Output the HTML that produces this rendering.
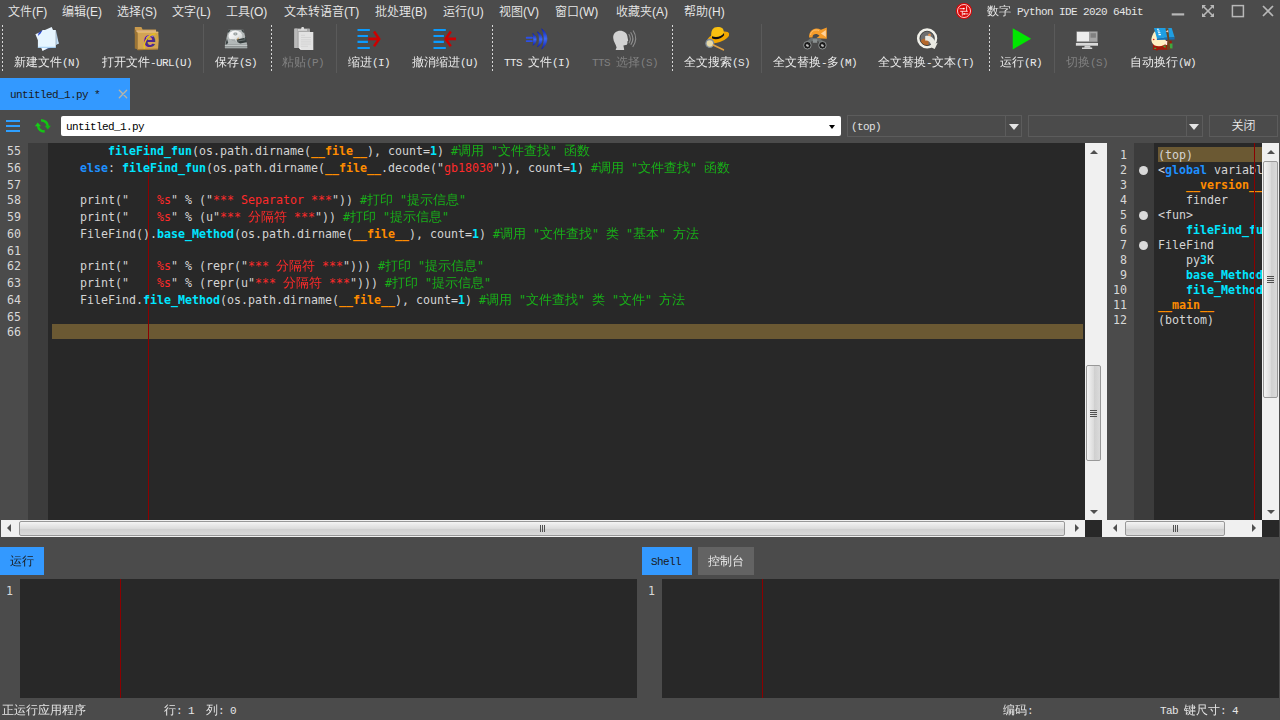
<!DOCTYPE html>
<html lang="zh-CN"><head><meta charset="utf-8"><title>数字 Python IDE 2020 64bit</title>
<style>
*{margin:0;padding:0;box-sizing:border-box}
html,body{width:1280px;height:720px;overflow:hidden;background:#4b4b4b}
body{position:relative;font-family:"Liberation Sans","Noto Sans CJK SC",sans-serif;font-size:12px;color:#e6e6e6}
.a{position:absolute}
.menu span{position:absolute;top:3px;font-weight:350;height:18px;line-height:18px;white-space:nowrap;color:#e8e8e8;font-size:12px}
.ss{font-family:"Liberation Mono","WenQuanYi Zen Hei",monospace;font-size:12px;white-space:nowrap;line-height:14px;height:14px;font-weight:400}
.ss i{font-style:normal;font-size:11px;letter-spacing:-.6px}
.tl{position:absolute;top:56px;color:#ececec}
.tl.d{color:#808080}
.grip{position:absolute;top:25px;width:1px;height:46px;background:repeating-linear-gradient(to bottom,#d8d8d8 0,#d8d8d8 2px,transparent 2px,transparent 4px)}
.sep{position:absolute;top:24px;width:1px;height:49px;background:#5a5a5a}
.code{font-family:"DejaVu Sans Mono","Noto Sans CJK SC",monospace;font-size:11.63px;white-space:pre;color:#d4d4d4}
.code u{text-decoration:none;line-height:0;font-size:13px;font-family:"WenQuanYi Zen Hei",sans-serif}
.ln{position:absolute;left:0;white-space:pre}
.k{color:#1e90ff;font-weight:bold}
.f{color:#00e5ff;font-weight:bold}
.o{color:#ff8c00;font-weight:bold}
.s{color:#ff2a2a}
.c{color:#18b018}
.n{color:#00e5ff;font-weight:bold}
</style></head>
<body>
<div class="menu">
<span style="left:8px">文件(F)</span>
<span style="left:62px">编辑(E)</span>
<span style="left:117px">选择(S)</span>
<span style="left:172px">文字(L)</span>
<span style="left:226px">工具(O)</span>
<span style="left:284px">文本转语音(T)</span>
<span style="left:375px">批处理(B)</span>
<span style="left:443px">运行(U)</span>
<span style="left:499px">视图(V)</span>
<span style="left:555px">窗口(W)</span>
<span style="left:616px">收藏夹(A)</span>
<span style="left:684px">帮助(H)</span>
</div>
<svg class="a" style="left:955px;top:2px" width="18" height="18" viewBox="0 0 18 18" fill="none"><circle cx="9" cy="9" r="8.100" fill="#dc0606"/><circle cx="9" cy="9" r="6.500" stroke="#ffffff" stroke-width=".8"/><path d="M4.600 6.700h4.200M11.600 4.200v5M5.200 9.300h7.600M7.300 9.300v4.300M9.600 11.900h3.800" stroke="#ffffff" stroke-width=".8"/><rect x="7.900" y="5.900" width="1.800" height="1.400" fill="#ffffff"/><rect x="8.200" y="11.200" width="1.800" height="1.400" fill="#ffffff"/></svg>
<div class="a ss" style="left:987px;top:5px;color:#e6e6e6">数字<i>&nbsp;Python&nbsp;IDE&nbsp;2020&nbsp;64bit</i></div>
<svg class="a" style="left:1160px;top:0" width="120" height="24" viewBox="0 0 120 24" fill="none" stroke="#b8b8b8"><path d="M11.7 14.4h12.5" stroke-width="2.2"/><path d="M43.2 6.2l9.6 9.6M52.8 6.2l-9.6 9.6" stroke-width="1.6"/><path d="M42 5h4l-4 4zM54 5v4l-4-4zM42 17v-4l4 4zM54 17h-4l4-4z" fill="#b8b8b8" stroke="none"/><rect x="72.4" y="5.6" width="11" height="11" stroke-width="1.5"/><path d="M103 6l10 10M113 6l-10 10" stroke-width="1.7"/></svg>
<div class="grip" style="left:2px"></div>
<div class="grip" style="left:271px"></div>
<div class="grip" style="left:492px"></div>
<div class="grip" style="left:672px"></div>
<div class="grip" style="left:989px"></div>
<div class="sep" style="left:203px"></div>
<div class="sep" style="left:336px"></div>
<div class="sep" style="left:761px"></div>
<div class="sep" style="left:1054px"></div>
<svg class="a" style="left:34px;top:26px" width="28" height="26" viewBox="0 0 28 26" fill="none"><path d="M1.400 8.200L17.700 1.100l7.050 16.500L8.500 24.700z" fill="#eaf5ff"/><path d="M22 4.500l2.750 13.100-2.750 1.200z" fill="#c4e0f8"/><path d="M8.500 24.700l3.500-1.500-4.200-1.300z" fill="#f8fcff"/><path d="M9 24.500l11-4.600.3 1z" fill="#2a58c8" opacity=".7"/><path d="M3.900 21.800V9.800L8.500 4.100 22 3.900v17.900z" fill="#e6f5ff"/><path d="M3.900 10L4.600 7 8.700 4.100 6.500 7.500z" fill="#2444d4"/><path d="M3.900 21.800h18.100v-1H3.900z" fill="#9ccaf2"/><path d="M22 3.900v17.900" stroke="#1a2a3a" stroke-width=".5" opacity=".6"/></svg>
<div class="ss tl" style="left:14px">新建文件<i>(N)</i></div>
<svg class="a" style="left:134px;top:26px" width="28" height="26" viewBox="0 0 28 26" fill="none"><path d="M.8 1.100h6.600l1.200 2.300h13.500v4H.8z" fill="#c99a4c"/><path d="M.8 3v19.500l3 1V6.500z" fill="#9c7434"/><path d="M2.500 4.500h19.500v1.500H2.500z" fill="#e0b890"/><path d="M3.600 5.800h20.600q1.300 8.500-.2 17.500l-20.400.700z" fill="#d2a354"/><path d="M3.600 5.800h20.600l.1 1.200H3.600z" fill="#e2b868"/><path d="M3.600 23l20.400-.6v1l-20.400.9z" fill="#a87c34"/><text x="9.200" y="20.600" font-family="Liberation Sans,sans-serif" font-weight="bold" font-size="22.500" fill="#4a2692">e</text><path d="M12.300 12a5.500 5.500 0 0 1 7-1.500" stroke="#9a6ee0" stroke-width="1.300"/><path d="M10.300 22.800C9.500 15.500 14 8.800 21.300 7.800" stroke="#e8c218" stroke-width="1.400"/><path d="M21.300 7.800c2 .5 2.500 3 1.500 5" stroke="#d8a820" stroke-width=".8"/></svg>
<div class="ss tl" style="left:102px">打开文件<i>-URL(U)</i></div>
<svg class="a" style="left:223px;top:26px" width="28" height="26" viewBox="0 0 28 26" fill="none"><defs><linearGradient id="pl" x1="0" y1="0" x2="1" y2="1"><stop offset="0" stop-color="#ffffff"/><stop offset=".55" stop-color="#e9ebeb"/><stop offset="1" stop-color="#b9bfbf"/></linearGradient></defs><path d="M5.400 3.800h15l3.800 15H1.900z" fill="#b2b8b8"/><path d="M5.400 3.800h2.300L6 6.200 4.600 7zM20.400 3.800h-2.300l1.700 2.400 1.400.8z" fill="#3c4444"/><path d="M3.900 12.500l1.300 4.200-1.700 2.100H2.300z" fill="#3c4444"/><ellipse cx="12.400" cy="10.100" rx="6.900" ry="5.500" fill="url(#pl)"/><path d="M6.500 13a6.900 5.500 0 0 0 6.500 2.600l-1-2.400z" fill="#8e9696" opacity=".7"/><ellipse cx="12.400" cy="8" rx="2.100" ry="1.400" fill="#8f9797"/><ellipse cx="12.400" cy="8" rx="1.100" ry=".7" fill="#c5caca"/><path d="M13.500 13.400l7.500-1.400 2 1.300.6 3-6.500 1.200-2.800-1.600z" fill="#343c3c"/><path d="M14 15.200l8.500-1.500" stroke="#8a9292" stroke-width=".6"/><path d="M15.300 11.700l-.6 2" stroke="#c8882a" stroke-width=".9"/><path d="M22.300 11l1.200 5" stroke="#3c4444" stroke-width="1"/><path d="M1.900 18.800h22.300v3.400H1.900z" fill="#8e9494"/><path d="M1.900 18.800h22.300v1.100H1.900z" fill="#c9cdcd"/><path d="M1.900 21h22.300v1.200H1.900z" fill="#a2a8a8"/></svg>
<div class="ss tl" style="left:215px">保存<i>(S)</i></div>
<svg class="a" style="left:292px;top:26px" width="28" height="26" viewBox="0 0 28 26" fill="none"><rect x="2.300" y="2.600" width="15.700" height="19.400" rx=".8" fill="#a9a9a9"/><rect x="2.300" y="2.600" width="3" height="19.400" fill="#b9b9b9"/><path d="M6 4.700V3.200h3l.7-2.100h1.900l.7 2.100h2.700v1.500z" fill="#dcdcdc"/><path d="M6.700 6.100h14.600v17.900H9l-2.300-2.300z" fill="#e2e2e2"/><path d="M6.700 21.700h2.300V24z" fill="#f6f6f6"/><path d="M9 9.300h4M9 11.500h10M9 13.700h10M9 15.900h10M9 18.100h10M9 20.300h7" stroke="#cfcfcf" stroke-width=".7"/></svg>
<div class="ss tl d" style="left:282px">粘贴<i>(P)</i></div>
<svg class="a" style="left:356px;top:26px" width="28" height="26" viewBox="0 0 28 26" fill="none"><path d="M1.500 3.960h12.300M1.500 10h10.400M1.500 15.900h10.400M1.500 21.960h12.300" stroke="#0a9bff" stroke-width="2.100"/><path d="M12.300 12.900h9.500" stroke="#cc0000" stroke-width="2.800"/><path d="M18 5.600l5.200 7.300-5.200 7.300" stroke="#cc0000" stroke-width="2.500" stroke-linejoin="miter"/></svg>
<div class="ss tl" style="left:348px">缩进<i>(I)</i></div>
<svg class="a" style="left:432px;top:26px" width="28" height="26" viewBox="0 0 28 26" fill="none"><path d="M1.500 3.960h12.300M1.500 10h10.400M1.500 15.900h10.400M1.500 21.960h12.300" stroke="#0a9bff" stroke-width="2.100"/><path d="M14.500 12.900h9.500" stroke="#cc0000" stroke-width="2.800"/><path d="M18.800 5.600l-5.200 7.300 5.200 7.300" stroke="#cc0000" stroke-width="2.500" stroke-linejoin="miter"/></svg>
<div class="ss tl" style="left:412px">撤消缩进<i>(U)</i></div>
<svg class="a" style="left:525px;top:26px" width="28" height="26" viewBox="0 0 28 26" fill="none"><defs><linearGradient id="tg" x1="0" y1="0" x2="0" y2="1"><stop offset="0" stop-color="#0e20b0"/><stop offset=".5" stop-color="#3c68f6"/><stop offset="1" stop-color="#0e20b0"/></linearGradient></defs><path d="M1.700 11.750h5.200M1.700 15.100h5.200" stroke="#2c50e8" stroke-width="1.900" stroke-linecap="round"/><path d="M7.800 7.600C12.100 10.500 12.100 16 8.200 19.200C9.100 16 9.100 10.500 7.800 7.600z" fill="url(#tg)" stroke="url(#tg)" stroke-width="1" stroke-linejoin="round"/><path d="M12.400 5.900C18.700 9.500 18.700 17 12.400 20.700C15.100 17 15.100 9.500 12.400 5.900z" fill="url(#tg)" stroke="url(#tg)" stroke-width=".8" stroke-linejoin="round"/><path d="M16.700 2.800C23.600 8 23.600 17.600 16.700 22.800C19.900 17.600 19.900 8 16.700 2.800z" fill="url(#tg)" stroke="url(#tg)" stroke-width=".8" stroke-linejoin="round"/></svg>
<div class="ss tl" style="left:504px"><i>TTS&nbsp;</i>文件<i>(I)</i></div>
<svg class="a" style="left:612px;top:26px" width="28" height="26" viewBox="0 0 28 26" fill="none"><path d="M1.200 12c-.5-9.500 14-9.500 14.400-.5l.600 3.500-1 .5.300 1.500-.6 1.800-3.500.7.700 3.400 0 1H3.600l1-2.500C4 18.500 1.500 16 1.200 12z" fill="#d2d2d2"/><path d="M16.700 8Q19.800 12.600 16.900 17.200M18.600 6.300Q23.200 12.600 18.800 18.800M21.100 4.500Q26.500 12.600 20.700 20.900" stroke="#8e8e8e" stroke-width="1.100"/></svg>
<div class="ss tl d" style="left:592px"><i>TTS&nbsp;</i>选择<i>(S)</i></div>
<svg class="a" style="left:704px;top:26px" width="28" height="26" viewBox="0 0 28 26" fill="none"><ellipse cx="14.200" cy="11.500" rx="11.600" ry="4.900" transform="rotate(-20 14.200 11.500)" fill="#f2a600"/><path d="M7.400 11.500C6.500 4 9 .9 13.500.9c4.500 0 6.500 1 6.600 7.800-3 3.800-8.700 4.800-12.700 2.800z" fill="#f9c010"/><path d="M8 10.300c4 1.800 9.500.6 12-3.200l.1 2.200c-3 3.800-8.700 4.800-12.100 3z" fill="#0c0c14"/><circle cx="5.800" cy="17.400" r="3.900" fill="#e6d9a8" stroke="#7d8c9c" stroke-width="1.300"/><path d="M9.300 19l10 4.800" stroke="#dfa040" stroke-width="1.700" stroke-linecap="round"/></svg>
<div class="ss tl" style="left:684px">全文搜索<i>(S)</i></div>
<svg class="a" style="left:803px;top:26px" width="28" height="26" viewBox="0 0 28 26" fill="none"><path d="M6.100 11.400C5.800 4 12 .3 18 3.800L23.800 1.400v11.300L13.300 12.200l3.200-2.400c-2.500-2.800-7-2-7 1.600z" fill="#f59c2a"/><path d="M22.900 4v7l-5-3.600z" fill="#ffd29a"/><path d="M7.500 9C8 5 12 3 16 4.500" stroke="#ffc070" stroke-width="1"/><path d="M4.800 16.500l3.600-3h7.200l3.600 3" stroke="#6a7070" stroke-width="3.200"/><rect x="9.800" y="13.200" width="4.400" height="3.600" fill="#8a9090"/><circle cx="4.400" cy="19.250" r="3.800" fill="#1c1c1c" stroke="#8e9292" stroke-width="1"/><circle cx="19.400" cy="19.250" r="3.800" fill="#1c1c1c" stroke="#8e9292" stroke-width="1"/><ellipse cx="4.400" cy="19.500" rx="1.600" ry="1.100" transform="rotate(35 4.400 19.500)" fill="#c4c4c4"/><ellipse cx="19.400" cy="19.500" rx="1.600" ry="1.100" transform="rotate(35 19.400 19.500)" fill="#c4c4c4"/></svg>
<div class="ss tl" style="left:773px">全文替换<i>-</i>多<i>(M)</i></div>
<svg class="a" style="left:914px;top:26px" width="28" height="26" viewBox="0 0 28 26" fill="none"><circle cx="13.100" cy="12.400" r="7.400" fill="#6e6e6e"/><path d="M7 14.500c1.500-2.500 6-2.500 7.500 0v4.500c-3 1-6 0-7.500-2z" fill="#b4682c"/><circle cx="15.500" cy="9" r="1.500" fill="#e09050"/><circle cx="13.100" cy="12.400" r="8.700" stroke="#f1f1ea" stroke-width="2.900"/><circle cx="13.100" cy="12.400" r="7.200" stroke="#1c1c1c" stroke-width=".7"/><path d="M11.200 10c5-1.500 9.500 2 10.200 7.500l2.300-.8-3 6.300-6-2.800 2.400-1c-.6-3-3-5-5.900-4.500z" fill="#e9e9e2"/></svg>
<div class="ss tl" style="left:878px">全文替换<i>-</i>文本<i>(T)</i></div>
<svg class="a" style="left:1010px;top:26px" width="28" height="26" viewBox="0 0 28 26" fill="none"><path d="M2.750 2.200L21.100 12.800 2.750 23.400z" fill="#00e600"/></svg>
<div class="ss tl" style="left:1000px">运行<i>(R)</i></div>
<svg class="a" style="left:1074px;top:26px" width="28" height="26" viewBox="0 0 28 26" fill="none"><rect x="2.400" y="5.300" width="21.200" height="11" fill="#8a8a8a"/><rect x="2.900" y="5.900" width="12.200" height="9.400" fill="#ececec"/><rect x="15.300" y="5.900" width="7.900" height="9.400" fill="#a6a6a6"/><rect x="16.500" y="7.200" width="5.400" height="4.500" fill="#808080"/><rect x="1.900" y="17" width="22.100" height="2.700" fill="#dadada"/><path d="M10.700 19.700h5.400l.5 2h-6.400z" fill="#cfcfcf"/><rect x="8" y="21.500" width="10.200" height="1.500" fill="#d6d6d6"/></svg>
<div class="ss tl d" style="left:1066px">切换<i>(S)</i></div>
<svg class="a" style="left:1151px;top:26px" width="28" height="26" viewBox="0 0 28 26" fill="none"><path d="M1.900 14.700h18.800v7.500l-4 1.500H7l-1 1-1.500-1H1.900z" fill="#a31a08"/><path d="M.4 13C1 9 3 6 4.500 4.500L14 12.600l1.700 4.500c-2 3-8 4-12 2.400C1.500 18 .2 16 .4 13z" fill="#fff0c2"/><circle cx="2.700" cy="13.500" r=".8" fill="#e01010"/><path d="M14.500 15h2v4h-2z" fill="#ffe8e0"/><path d="M17.750 17.600h3.750v5h-3.750zM3.200 21.800h2v1.200h-2zM12 20.500l2.500-1.500v3z" fill="#3fa83f"/><path d="M2.960 1.960H20.700l2.900 9.340L5.900 12.200z" fill="#1f9ee2"/><path d="M5.900 12.200l17.700-.900v2.100L5.900 14.100z" fill="#1670b4"/><path d="M6 3.200h1.800M6.500 5h2.200M7 6.800h2.400M7.500 8.600h2.400" stroke="#fff" stroke-width="1.100"/><path d="M14.400 2.200h2.900l1.900 21.300h-3.500l1-10z" fill="#6b4622"/><path d="M14.600 5.500l2.500-1.500.3 2.500z" fill="#e8c8c0"/></svg>
<div class="ss tl" style="left:1130px">自动换行<i>(W)</i></div>
<div class="a" style="left:0;top:78px;width:130px;height:32px;background:#3399ff"></div>
<div class="a ss" style="left:10px;top:88px;color:#1a1a1a"><i>untitled_1.py&nbsp;*</i></div>
<svg class="a" style="left:117px;top:88px" width="12" height="12" viewBox="0 0 12 12"><path d="M2.300 2.300l7.400 7.400M9.700 2.300l-7.400 7.400" stroke="#b9b4a6" stroke-width="1.300" stroke-linecap="round"/></svg>
<div class="a" style="left:6px;top:120px;width:14px;height:2px;background:#2e9fff;box-shadow:0 5px 0 #2e9fff,0 10px 0 #2e9fff"></div>
<svg class="a" style="left:34px;top:118px" width="18" height="16" viewBox="0 0 18 16" fill="none"><path d="M7 2.300Q13.300 2.800 13.700 8.200" stroke="#14c414" stroke-width="2.400"/><path d="M10.700 7.800h6.200l-3.200 3.600z" fill="#12b812"/><path d="M10.700 13.500Q4.500 13 4 7.800" stroke="#14c414" stroke-width="2.400"/><path d="M.9 8.200h6.200L3.700 4.400z" fill="#18cc18"/></svg>
<div class="a" style="left:61px;top:116px;width:780px;height:20px;background:#fff;border-radius:2px"></div>
<div class="a ss" style="left:66px;top:120px;color:#000"><i>untitled_1.py</i></div>
<div class="a" style="left:828.500px;top:125px;border:3.800px solid transparent;border-top:4.200px solid #000;border-bottom:0"></div>
<div class="a" style="left:847px;top:115px;width:175px;height:22px;border:1px solid #5c5c5c"></div>
<div class="a" style="left:1005px;top:116px;width:1px;height:20px;background:#5c5c5c"></div>
<div class="a ss" style="left:851px;top:120px;color:#e0e0e0"><i>(top)</i></div>
<div class="a" style="left:1009px;top:124px;border:5px solid transparent;border-top:6px solid #e4e4e4;border-bottom:0"></div>
<div class="a" style="left:1028px;top:115px;width:175px;height:22px;border:1px solid #5c5c5c"></div>
<div class="a" style="left:1186px;top:116px;width:1px;height:20px;background:#5c5c5c"></div>
<div class="a" style="left:1189px;top:124px;border:5px solid transparent;border-top:6px solid #e4e4e4;border-bottom:0"></div>
<div class="a" style="left:1209px;top:115px;width:69px;height:22px;border:1px solid #5c5c5c;text-align:center;line-height:20px;font-size:12px;font-weight:350;color:#ececec">关闭</div>
<div class="a" style="left:0;top:143px;width:1085px;height:377px;background:#282828;overflow:hidden">
<div class="a" style="left:0;top:0;width:28px;height:377px;background:#4b4b4b"></div>
<div class="a" style="left:28px;top:0;width:20px;height:377px;background:#3c3c3c"></div>
<div class="a" style="left:52px;top:181px;width:1031px;height:15px;background:#6b5933"></div>
<div class="a" style="left:148px;top:0;width:1px;height:377px;background:#8b0000"></div>
<div class="code ln" style="top:0px;left:7px;height:17px;line-height:17px;color:#d8d8d8">55</div>
<div class="code ln" style="top:0px;left:59px;height:17px;line-height:17px">       <b class="f">fileFind_fun</b>(os.path.dirname(<b class="o">__file__</b>), count=<b class="n">1</b>) <span class="c">#<u>调用</u> "<u>文件查找</u>" <u>函数</u></span></div>
<div class="code ln" style="top:17px;left:7px;height:17px;line-height:17px;color:#d8d8d8">56</div>
<div class="code ln" style="top:17px;left:59px;height:17px;line-height:17px">   <b class="k">else</b>: <b class="f">fileFind_fun</b>(os.path.dirname(<b class="o">__file__</b>.decode("<span class="s">gb18030</span>")), count=<b class="n">1</b>) <span class="c">#<u>调用</u> "<u>文件查找</u>" <u>函数</u></span></div>
<div class="code ln" style="top:35px;left:7px;height:15px;line-height:15px;color:#d8d8d8">57</div>
<div class="code ln" style="top:49px;left:7px;height:17px;line-height:17px;color:#d8d8d8">58</div>
<div class="code ln" style="top:49px;left:59px;height:17px;line-height:17px">   print("<span class="s">    %s</span>" % ("<span class="s">*** Separator ***</span>")) <span class="c">#<u>打印</u> "<u>提示信息</u>"</span></div>
<div class="code ln" style="top:66px;left:7px;height:17px;line-height:17px;color:#d8d8d8">59</div>
<div class="code ln" style="top:66px;left:59px;height:17px;line-height:17px">   print("<span class="s">    %s</span>" % (u"<span class="s">*** <u>分隔符</u> ***</span>")) <span class="c">#<u>打印</u> "<u>提示信息</u>"</span></div>
<div class="code ln" style="top:83px;left:7px;height:17px;line-height:17px;color:#d8d8d8">60</div>
<div class="code ln" style="top:83px;left:59px;height:17px;line-height:17px">   FileFind().<b class="f">base_Method</b>(os.path.dirname(<b class="o">__file__</b>), count=<b class="n">1</b>) <span class="c">#<u>调用</u> "<u>文件查找</u>" <u>类</u> "<u>基本</u>" <u>方法</u></span></div>
<div class="code ln" style="top:101px;left:7px;height:15px;line-height:15px;color:#d8d8d8">61</div>
<div class="code ln" style="top:115px;left:7px;height:17px;line-height:17px;color:#d8d8d8">62</div>
<div class="code ln" style="top:115px;left:59px;height:17px;line-height:17px">   print("<span class="s">    %s</span>" % (repr("<span class="s">*** <u>分隔符</u> ***</span>"))) <span class="c">#<u>打印</u> "<u>提示信息</u>"</span></div>
<div class="code ln" style="top:132px;left:7px;height:17px;line-height:17px;color:#d8d8d8">63</div>
<div class="code ln" style="top:132px;left:59px;height:17px;line-height:17px">   print("<span class="s">    %s</span>" % (repr(u"<span class="s">*** <u>分隔符</u> ***</span>"))) <span class="c">#<u>打印</u> "<u>提示信息</u>"</span></div>
<div class="code ln" style="top:149px;left:7px;height:17px;line-height:17px;color:#d8d8d8">64</div>
<div class="code ln" style="top:149px;left:59px;height:17px;line-height:17px">   FileFind.<b class="f">file_Method</b>(os.path.dirname(<b class="o">__file__</b>), count=<b class="n">1</b>) <span class="c">#<u>调用</u> "<u>文件查找</u>" <u>类</u> "<u>文件</u>" <u>方法</u></span></div>
<div class="code ln" style="top:167px;left:7px;height:15px;line-height:15px;color:#d8d8d8">65</div>
<div class="code ln" style="top:182px;left:7px;height:15px;line-height:15px;color:#d8d8d8">66</div>
</div>
<div class="a" style="left:1085px;top:143px;width:17px;height:377px;background:#f0f0f0"></div>
<div class="a" style="left:1090px;top:150px;border:4px solid transparent;border-bottom:4px solid #505050;border-top:0"></div>
<div class="a" style="left:1090px;top:510px;border:4px solid transparent;border-top:4px solid #505050;border-bottom:0"></div>
<div class="a" style="left:1086px;top:365px;width:15px;height:96px;border:1px solid #989898;border-radius:2px;background:linear-gradient(to right,#f4f4f4,#dcdcdc 50%,#cfcfcf 52%,#dadada)"></div>
<div class="a" style="left:1090px;top:410px;width:7px;height:1px;background:#505050;box-shadow:0 2px 0 #505050,0 4px 0 #505050,0 6px 0 #505050"></div>
<div class="a" style="left:1px;top:520px;width:1084px;height:17px;background:#f0f0f0"></div>
<div class="a" style="left:7px;top:524px;border:4px solid transparent;border-right:4px solid #505050;border-left:0"></div>
<div class="a" style="left:1075px;top:524px;border:4px solid transparent;border-left:4px solid #505050;border-right:0"></div>
<div class="a" style="left:19px;top:521px;width:1046px;height:15px;border:1px solid #989898;border-radius:2px;background:linear-gradient(to bottom,#f4f4f4,#dcdcdc 50%,#cfcfcf 52%,#dadada)"></div>
<div class="a" style="left:540px;top:525px;width:1px;height:7px;background:#505050;box-shadow:2px 0 0 #505050,4px 0 0 #505050"></div>
<div class="a" style="left:1085px;top:520px;width:17px;height:17px;background:#282828"></div>
<div class="a" style="left:1102px;top:143px;width:5px;height:394px;background:#f0f0f0"></div>
<div class="a" style="left:1107px;top:143px;width:155px;height:377px;background:#282828;overflow:hidden">
<div class="a" style="left:0;top:0;width:27px;height:377px;background:#4b4b4b"></div>
<div class="a" style="left:27px;top:0;width:20px;height:377px;background:#3c3c3c"></div>
<div class="a" style="left:51px;top:4px;width:104px;height:15px;background:#6b5933"></div>
<div class="code ln" style="top:5px;left:0;width:20px;text-align:right;height:15px;line-height:15px;color:#d8d8d8">1</div>
<div class="code ln" style="top:5px;left:51px;height:15px;line-height:15px">(top)</div>
<div class="code ln" style="top:20px;left:0;width:20px;text-align:right;height:15px;line-height:15px;color:#d8d8d8">2</div>
<div class="a" style="left:31.700px;top:22.8px;width:9.600px;height:9.600px;border-radius:5px;background:#d9d9d9"></div>
<div class="code ln" style="top:20px;left:51px;height:15px;line-height:15px">&lt;<b class="k">global</b> variabl</div>
<div class="code ln" style="top:35px;left:0;width:20px;text-align:right;height:15px;line-height:15px;color:#d8d8d8">3</div>
<div class="code ln" style="top:35px;left:51px;height:15px;line-height:15px">    <b class="o">__version__</b></div>
<div class="code ln" style="top:50px;left:0;width:20px;text-align:right;height:15px;line-height:15px;color:#d8d8d8">4</div>
<div class="code ln" style="top:50px;left:51px;height:15px;line-height:15px">    finder</div>
<div class="code ln" style="top:65px;left:0;width:20px;text-align:right;height:15px;line-height:15px;color:#d8d8d8">5</div>
<div class="a" style="left:31.700px;top:67.8px;width:9.600px;height:9.600px;border-radius:5px;background:#d9d9d9"></div>
<div class="code ln" style="top:65px;left:51px;height:15px;line-height:15px">&lt;fun&gt;</div>
<div class="code ln" style="top:80px;left:0;width:20px;text-align:right;height:15px;line-height:15px;color:#d8d8d8">6</div>
<div class="code ln" style="top:80px;left:51px;height:15px;line-height:15px">    <b class="f">fileFind_fu</b></div>
<div class="code ln" style="top:95px;left:0;width:20px;text-align:right;height:15px;line-height:15px;color:#d8d8d8">7</div>
<div class="a" style="left:31.700px;top:97.8px;width:9.600px;height:9.600px;border-radius:5px;background:#d9d9d9"></div>
<div class="code ln" style="top:95px;left:51px;height:15px;line-height:15px">FileFind</div>
<div class="code ln" style="top:110px;left:0;width:20px;text-align:right;height:15px;line-height:15px;color:#d8d8d8">8</div>
<div class="code ln" style="top:110px;left:51px;height:15px;line-height:15px">    py<b class="n">3</b>K</div>
<div class="code ln" style="top:125px;left:0;width:20px;text-align:right;height:15px;line-height:15px;color:#d8d8d8">9</div>
<div class="code ln" style="top:125px;left:51px;height:15px;line-height:15px">    <b class="f">base_Method</b></div>
<div class="code ln" style="top:140px;left:0;width:20px;text-align:right;height:15px;line-height:15px;color:#d8d8d8">10</div>
<div class="code ln" style="top:140px;left:51px;height:15px;line-height:15px">    <b class="f">file_Method</b></div>
<div class="code ln" style="top:155px;left:0;width:20px;text-align:right;height:15px;line-height:15px;color:#d8d8d8">11</div>
<div class="code ln" style="top:155px;left:51px;height:15px;line-height:15px"><b class="o">__main__</b></div>
<div class="code ln" style="top:170px;left:0;width:20px;text-align:right;height:15px;line-height:15px;color:#d8d8d8">12</div>
<div class="code ln" style="top:170px;left:51px;height:15px;line-height:15px">(bottom)</div>
<div class="a" style="left:147px;top:0;width:1px;height:377px;background:#8b0000"></div>
</div>
<div class="a" style="left:1262px;top:143px;width:17px;height:377px;background:#f0f0f0"></div>
<div class="a" style="left:1267px;top:150px;border:4px solid transparent;border-bottom:4px solid #505050;border-top:0"></div>
<div class="a" style="left:1267px;top:510px;border:4px solid transparent;border-top:4px solid #505050;border-bottom:0"></div>
<div class="a" style="left:1263px;top:161px;width:15px;height:237px;border:1px solid #989898;border-radius:2px;background:linear-gradient(to right,#f4f4f4,#dcdcdc 50%,#cfcfcf 52%,#dadada)"></div>
<div class="a" style="left:1267px;top:276px;width:7px;height:1px;background:#505050;box-shadow:0 2px 0 #505050,0 4px 0 #505050,0 6px 0 #505050"></div>
<div class="a" style="left:1107px;top:520px;width:155px;height:17px;background:#f0f0f0"></div>
<div class="a" style="left:1113px;top:524px;border:4px solid transparent;border-right:4px solid #505050;border-left:0"></div>
<div class="a" style="left:1252px;top:524px;border:4px solid transparent;border-left:4px solid #505050;border-right:0"></div>
<div class="a" style="left:1125px;top:521px;width:100px;height:15px;border:1px solid #989898;border-radius:2px;background:linear-gradient(to bottom,#f4f4f4,#dcdcdc 50%,#cfcfcf 52%,#dadada)"></div>
<div class="a" style="left:1173px;top:525px;width:1px;height:7px;background:#505050;box-shadow:2px 0 0 #505050,4px 0 0 #505050"></div>
<div class="a" style="left:1262px;top:520px;width:17px;height:17px;background:#282828"></div>
<div class="a" style="left:0;top:547px;width:44px;height:28px;background:#3399ff"></div>
<div class="a ss" style="left:10px;top:555px;color:#1a1a1a">运行</div>
<div class="a" style="left:20px;top:579px;width:617px;height:119px;background:#282828"></div>
<div class="a" style="left:120px;top:579px;width:1px;height:119px;background:#8b0000"></div>
<div class="a code" style="left:6px;top:584px;line-height:15px;color:#d8d8d8">1</div>
<div class="a" style="left:642px;top:547px;width:50px;height:28px;background:#3399ff"></div>
<div class="a ss" style="left:651px;top:555px;color:#1a1a1a"><i>Shell</i></div>
<div class="a" style="left:698px;top:547px;width:56px;height:28px;background:#636363"></div>
<div class="a ss" style="left:708px;top:555px;color:#ececec">控制台</div>
<div class="a" style="left:662px;top:579px;width:617px;height:119px;background:#282828"></div>
<div class="a" style="left:762px;top:579px;width:1px;height:119px;background:#8b0000"></div>
<div class="a code" style="left:648px;top:584px;line-height:15px;color:#d8d8d8">1</div>
<div class="a ss" style="left:2px;top:704px;color:#e6e6e6">正运行应用程序</div>
<div class="a ss" style="left:164px;top:704px;color:#e6e6e6">行<i>:&nbsp;1&nbsp;&nbsp;</i>列<i>:&nbsp;0</i></div>
<div class="a ss" style="left:1003px;top:704px;color:#e6e6e6">编码<i>:</i></div>
<div class="a ss" style="left:1160px;top:704px;color:#e6e6e6"><i>Tab&nbsp;</i>键尺寸<i>:&nbsp;4</i></div>
</body></html>
